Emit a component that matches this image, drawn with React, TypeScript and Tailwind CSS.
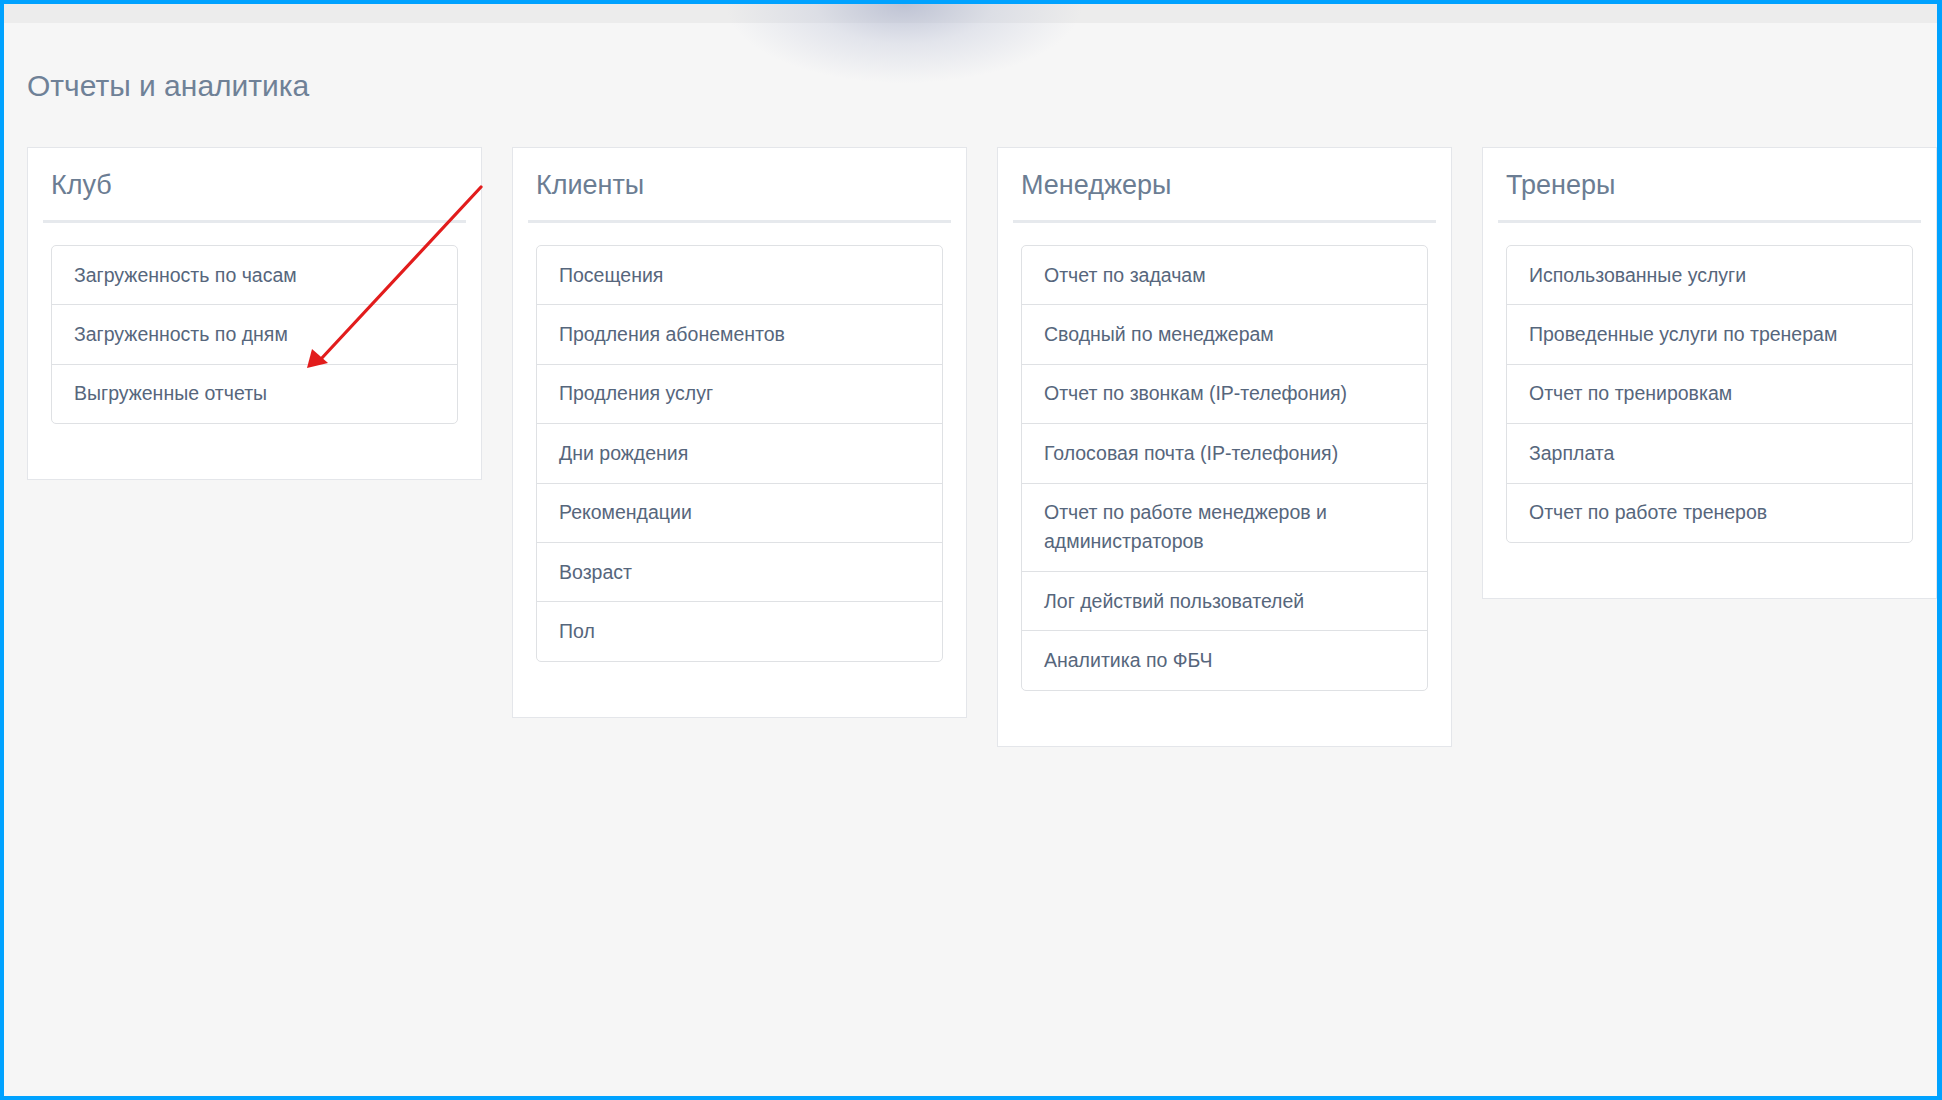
import React from 'react';

type Section = {
  title: string;
  items: string[];
};

const sections: Section[] = [
  {
    title: 'Клуб',
    items: ['Загруженность по часам', 'Загруженность по дням', 'Выгруженные отчеты'],
  },
  {
    title: 'Клиенты',
    items: [
      'Посещения',
      'Продления абонементов',
      'Продления услуг',
      'Дни рождения',
      'Рекомендации',
      'Возраст',
      'Пол',
    ],
  },
  {
    title: 'Менеджеры',
    items: [
      'Отчет по задачам',
      'Сводный по менеджерам',
      'Отчет по звонкам (IP-телефония)',
      'Голосовая почта (IP-телефония)',
      'Отчет по работе менеджеров и администраторов',
      'Лог действий пользователей',
      'Аналитика по ФБЧ',
    ],
  },
  {
    title: 'Тренеры',
    items: [
      'Использованные услуги',
      'Проведенные услуги по тренерам',
      'Отчет по тренировкам',
      'Зарплата',
      'Отчет по работе тренеров',
    ],
  },
];

function ReportCard({ section }: { section: Section }) {
  return (
    <div className="w-[455px] shrink-0 border border-[#e4e6ea] bg-white pb-[55px]">
      <div className="mx-[15px] border-b-[3px] border-[#e6e9ed] pl-[8px] pt-[22px] pb-[20px]">
        <h2 className="text-[27px] font-normal leading-[30px] text-[#6b7d93]">{section.title}</h2>
      </div>
      <ul className="mx-[23px] mt-[22px] divide-y divide-[#dfe1e4] rounded-[5px] border border-[#dfe1e4]">
        {section.items.map((item) => (
          <li
            key={item}
            className="py-[14.7px] pl-[22px] pr-[30px] text-[19.5px] leading-[29px] text-[#56667c]"
          >
            {item}
          </li>
        ))}
      </ul>
    </div>
  );
}

export default function App() {
  return (
    <div
      className="relative h-[1100px] w-[1942px] overflow-hidden border-t-4 border-b-4 border-l-4 border-r-[5px] border-[#00a2ff] bg-[#f6f6f6]"
      style={{ fontFamily: '"Liberation Sans", Arial, sans-serif' }}
    >
      {/* top strip */}
      <div className="h-[19px] bg-[#ececec]" />

      {/* soft shadow left by a dropdown above */}
      <div className="pointer-events-none absolute left-[720px] top-[-80px] h-[160px] w-[360px] rounded-[50%] bg-[radial-gradient(ellipse_at_center,rgba(160,168,196,0.6)_0%,rgba(190,196,216,0.35)_35%,rgba(246,246,246,0)_70%)]" />

      <div className="px-[23px]">
        <h1 className="mt-[46px] text-[30px] font-normal leading-[34px] text-[#6f8197]">
          Отчеты и аналитика
        </h1>

        <div className="mt-[44px] flex items-start gap-[30px]">
          {sections.map((s) => (
            <ReportCard key={s.title} section={s} />
          ))}
        </div>
      </div>

      {/* annotation arrow */}
      <svg
        className="pointer-events-none absolute left-0 top-0"
        width="1942"
        height="1100"
        viewBox="0 0 1942 1100"
      >
        <line x1="477" y1="183" x2="317" y2="355" stroke="#e21c1c" strokeWidth="3.2" strokeLinecap="round" />
        <polygon points="303,364 308,345 324,359" fill="#e21c1c" />
      </svg>
    </div>
  );
}
